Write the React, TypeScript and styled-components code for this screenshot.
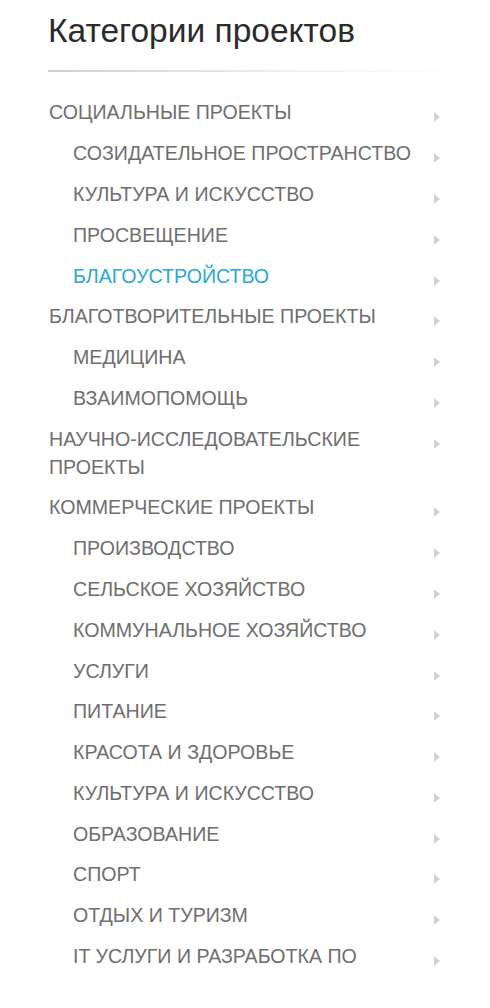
import React from 'react';
import styled, { createGlobalStyle } from 'styled-components';

type Category = {
    title: string,
    sub?: boolean,
    active?: boolean,
}

const categories: Category[] = [
    { title: 'Социальные проекты' },
    { title: 'Созидательное пространство', sub: true },
    { title: 'Культура и искусство', sub: true },
    { title: 'Просвещение', sub: true },
    { title: 'Благоустройство', sub: true, active: true },
    { title: 'Благотворительные проекты' },
    { title: 'Медицина', sub: true },
    { title: 'Взаимопомощь', sub: true },
    { title: 'Научно-исследовательские проекты' },
    { title: 'Коммерческие проекты' },
    { title: 'Производство', sub: true },
    { title: 'Сельское хозяйство', sub: true },
    { title: 'Коммунальное хозяйство', sub: true },
    { title: 'Услуги', sub: true },
    { title: 'Питание', sub: true },
    { title: 'Красота и здоровье', sub: true },
    { title: 'Культура и искусство', sub: true },
    { title: 'Образование', sub: true },
    { title: 'Спорт', sub: true },
    { title: 'Отдых и туризм', sub: true },
    { title: 'IT услуги и разработка ПО', sub: true },
]

const GlobalStyle = createGlobalStyle`
    body {
        margin: 0;
        background: #fff;
        font-family: "Liberation Sans", Arial, sans-serif;
    }
`

const Sidebar = styled.aside`
    width: 490px;
    box-sizing: border-box;
    padding: 11px 30px 30px 48px;
`

const Title = styled.h2`
    margin: 0;
    font-size: 33.5px;
    font-weight: normal;
    line-height: 40px;
    color: #2b2b2b;
`

const Divider = styled.div`
    height: 2px;
    width: 412px;
    margin: 19px 0 20px;
    background: linear-gradient(to right, #cfcfcf, rgba(230, 230, 230, 0.6) 60%, rgba(255, 255, 255, 0));
`

const List = styled.ul`
    list-style: none;
    margin: 0;
    padding: 0;
`

const Item = styled.li<{ $sub?: boolean, $active?: boolean }>`
    display: flex;
    align-items: flex-start;
    padding: 6.4px 0 6.4px ${p => p.$sub ? '25px' : '1px'};
    font-size: 19.6px;
    line-height: 28px;
    text-transform: uppercase;
    color: ${p => p.$active ? '#2aa8d6' : '#6e6e6e'};
    cursor: pointer;
`

const Label = styled.span`
    flex: 1;
    margin-right: 8px;
`

const Arrow = styled.span`
    flex-shrink: 0;
    width: 0;
    height: 0;
    margin: 14px 20px 0 0;
    border-top: 5px solid transparent;
    border-bottom: 5px solid transparent;
    border-left: 6px solid #d2d2d2;
`

const App = () => {
    return (
        <>
            <GlobalStyle />
            <Sidebar>
                <Title>Категории проектов</Title>
                <Divider />
                <List>
                    {categories.map((c, i) => (
                        <Item key={i} $sub={c.sub} $active={c.active}>
                            <Label>{c.title}</Label>
                            <Arrow />
                        </Item>
                    ))}
                </List>
            </Sidebar>
        </>
    )
}

export default App;
